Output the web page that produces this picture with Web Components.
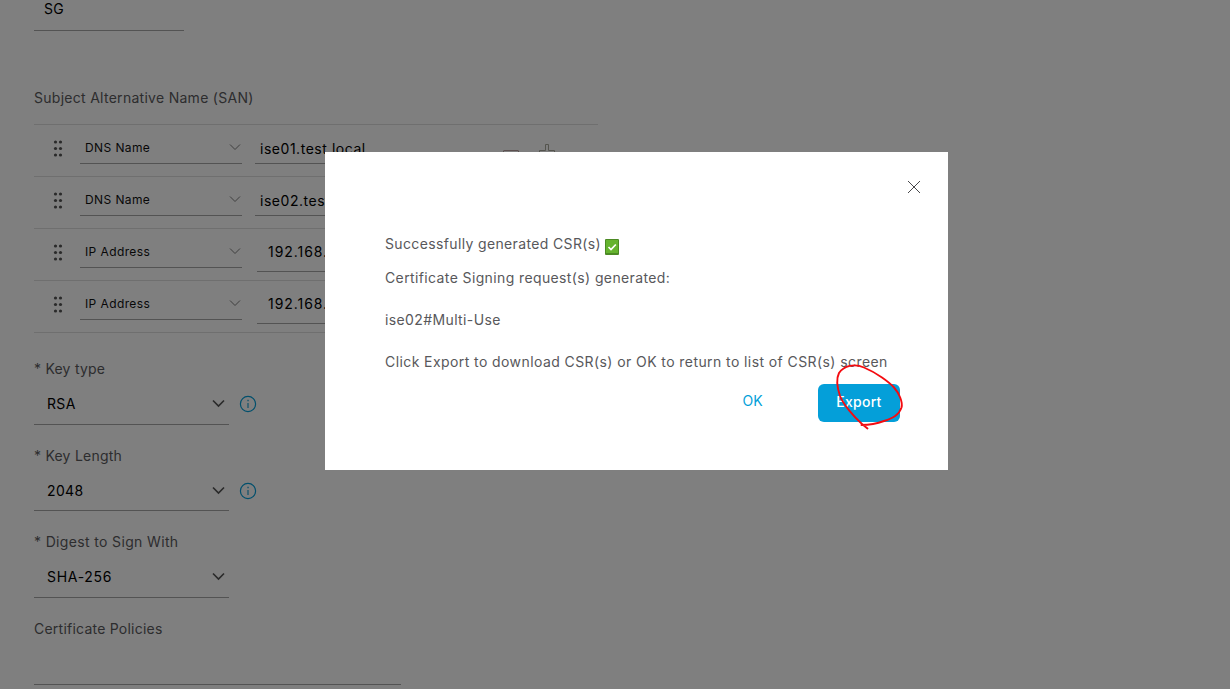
<!DOCTYPE html>
<html lang="en">
<head>
<meta charset="utf-8">
<title>Certificate Signing Request</title>
<style>
  html, body { margin: 0; height: 100%; overflow: hidden; }
  body { background: #fff; font-family: Inter, "Liberation Sans", sans-serif; }
</style>
</head>
<body>
<csr-page>
  <text-field value="SG" style="--w: 150px"></text-field>
  <san-table label="Subject Alternative Name (SAN)">
    <san-row type="DNS Name" value="ise01.test.local"></san-row>
    <san-row type="DNS Name" value="ise02.test.local"></san-row>
    <san-row type="IP Address" value="192.168.1.11" ip></san-row>
    <san-row type="IP Address" value="192.168.1.12" ip></san-row>
  </san-table>
  <select-field label="* Key type" value="RSA" style="--h: 92px" info></select-field>
  <select-field label="* Key Length" value="2048" style="--h: 86px; --box: 45px" info></select-field>
  <select-field label="* Digest to Sign With" value="SHA-256" style="--h: 87px; --label-ls: .35px; --value-ls: .7px"></select-field>
  <select-field label="Certificate Policies" style="--h: 87px; --w: 367px" plain></select-field>
  <csr-dialog slot="overlay">
    <p style="letter-spacing: .36px">Successfully generated CSR(s) <check-mark></check-mark></p>
    <p><span style="letter-spacing: .38px">Certificate Signing request(s) generated:<br><br>ise02#Multi-Use</span><br><br>Click Export to download CSR(s) or OK to return to list of CSR(s) screen</p>
    <dialog-button slot="actions">OK</dialog-button>
    <dialog-button slot="actions" primary>Export</dialog-button>
  </csr-dialog>
</csr-page>

<script>
// ============================================
// Helper
// ============================================

/**
 * Register a custom element
 * @param {string} name - tag name
 * @param {string} styles - scoped CSS
 * @param {(el: HTMLElement) => string} render - template function
 */
function define(name, styles, render) {
  customElements.define(name, class extends HTMLElement {
    connectedCallback() {
      if (this.shadowRoot) return;
      this.attachShadow({ mode: 'open' });
      this.shadowRoot.innerHTML = `<style>${styles}</style>${render(this)}`;
    }
  });
}

// ============================================
// Page and form fields
// ============================================

define('csr-page', `
  :host { display: block; height: 689px; overflow: hidden; }
  main { display: flex; flex-direction: column; align-items: flex-start; padding-left: 34px; }
`, () => `<main><slot></slot></main><slot name="overlay"></slot>`);

define('text-field', `
  :host { display: flex; box-sizing: border-box; width: var(--w); height: 31px;
    padding-left: 10px; border-bottom: 1px solid #a6a6a6; font-size: 14px; line-height: 18px; letter-spacing: .2px; color: #000; }
`, el => `<span>${el.getAttribute('value')}</span>`);

define('san-table', `
  :host { display: block; width: 564px; }
  h3 { margin: 57px 0 16px; font-size: 14px; line-height: 20px; font-weight: 400; letter-spacing: .28px; color: #5a5a5d; }
  .rows { border-bottom: 1px solid #dedede; }
`, el => `<h3>${el.getAttribute('label')}</h3><div class="rows"><slot></slot></div>`);

define('san-row', `
  :host { display: flex; box-sizing: border-box; height: 52px; border-top: 1px solid #dedede; }
  .grip { width: 10px; height: 18px; margin: 14px 17px 0 19px; fill: #555; flex: none; }
  .type { display: flex; justify-content: space-between; box-sizing: border-box; width: 162px; height: 39px;
    padding: 13px 1.5px 0 5px; border-bottom: 1px solid #a6a6a6; font-size: 12px; line-height: 20px;
    letter-spacing: .4px; color: #111; }
  .type svg { width: 12px; height: 8px; margin-top: 5px; }
  .value { box-sizing: border-box; width: 230px; height: 39px; margin-left: 13px; padding: 14px 0 0 5px;
    border-bottom: 1px solid #a6a6a6; font-size: 14px; line-height: 20px; letter-spacing: .53px; color: #000; white-space: nowrap; }
  :host([ip]) .value { height: 43px; width: 228px; margin-left: 15px; padding: 13px 0 0 11px; letter-spacing: .95px; }
  .tools { display: flex; gap: 20px; padding: 19px 0 0 18px; }
  .tools svg { width: 16px; height: 16px; fill: none; }
`, el => `
  <svg class="grip" viewBox="0 0 10 18">
    <circle cx="2.5" cy="3" r="1.6"/><circle cx="7.5" cy="3" r="1.6"/>
    <circle cx="2.5" cy="9.5" r="1.6"/><circle cx="7.5" cy="9.5" r="1.6"/>
    <circle cx="2.5" cy="16" r="1.6"/><circle cx="7.5" cy="16" r="1.6"/>
  </svg>
  <div class="type"><span>${el.getAttribute('type')}</span>
    <svg viewBox="0 0 12 8"><path d="M1 1.5l5 5 5-5" fill="none" stroke="#7d7d7d"/></svg>
  </div>
  <div class="value">${el.getAttribute('value')}</div>
  <div class="tools">
    <svg viewBox="0 0 16 16"><rect x=".5" y="6.5" width="15" height="3" rx=".5" stroke="#b8a0a0"/></svg>
    <svg viewBox="0 0 16 16"><path d="M6.5.5h3v6h6v3h-6v6h-3v-6h-6v-3h6z" stroke="#a8a89c"/></svg>
  </div>`);

define('info-icon', `
  :host { display: block; width: 18px; height: 18px; }
  svg { display: block; }
`, () => `
  <svg width="18" height="18" viewBox="0 0 18 18">
    <circle cx="9" cy="9" r="7.6" fill="none" stroke="#049fd9" stroke-width="1.2"/>
    <path d="M8.2 5.4h1.7M9 8v5" stroke="#4eb4dd" stroke-width="1.5"/>
  </svg>`);

define('select-field', `
  :host { display: flex; flex-direction: column; justify-content: flex-end; height: var(--h); }
  label { font-size: 14px; line-height: 20px; letter-spacing: var(--label-ls, .23px); color: #5a5a5d; }
  .line { display: flex; align-items: flex-start; gap: 10px; }
  .box { display: flex; justify-content: space-between; box-sizing: border-box; width: var(--w, 195px); height: var(--box, 46px);
    padding: 15px 4.5px 0 13px; border-bottom: 1px solid #a6a6a6; font-size: 14px; line-height: 20px;
    letter-spacing: var(--value-ls, .35px); color: #000; }
  .box svg { width: 13px; height: 9px; margin-top: 5px; }
  info-icon { margin-top: 16px; }
`, el => {
  const plain = el.hasAttribute('plain');
  const value = plain ? '' : `<span>${el.getAttribute('value')}</span>
    <svg viewBox="0 0 13 9"><path d="M1 1.5l5.5 5.5 5.5-5.5" fill="none" stroke="#555" stroke-width="1.7"/></svg>`;
  return `<label>${el.getAttribute('label')}</label>
    <div class="line"><div class="box">${value}</div>${el.hasAttribute('info') ? '<info-icon></info-icon>' : ''}</div>`;
});

// ============================================
// Dialog
// ============================================

define('csr-dialog', `
  :host { position: absolute; inset: 0; display: flex; align-items: flex-start; background: rgba(0, 0, 0, .5); }
  section { position: relative; display: flex; flex-direction: column; box-sizing: border-box;
    width: 623px; height: 318px; margin: 152px 0 0 325px; padding: 28px 48px 0 60px; background: #fff; }
  .close { align-self: flex-end; width: 14px; height: 14px; margin-right: -21px; }
  .text { margin-top: 39px; font-size: 14px; line-height: 21px; letter-spacing: .415px; color: #58585b; white-space: nowrap; }
  ::slotted(p) { margin: 0 0 12px; }
  .actions { display: flex; justify-content: flex-end; gap: 36px; margin-top: 0; }
  .mark { position: absolute; left: 505px; top: 208px; width: 80px; height: 76px; }
`, () => `
  <section>
    <svg class="close" viewBox="0 0 14 14"><path d="M1 1l12 12M13 1L1 13" stroke="#48484b" stroke-width="1"/></svg>
    <div class="text"><slot></slot></div>
    <div class="actions"><slot name="actions"></slot></div>
    <!-- hand-drawn ring around the export button -->
    <svg class="mark" viewBox="830 360 80 76">
      <path d="M867.500 428.500L862 424C854 417 843 404 840 396C837 387 836.500 378 839 373C844 366 854 363 864 367.500C877 373 889 382 894 387.500C899 393 903 402 901.500 407.500C899 415 893 418 884 421C876 424 869 425 861.500 425"
        fill="none" stroke="#f40b10" stroke-width="1.900" stroke-linecap="round" stroke-linejoin="round"/>
    </svg>
  </section>`);

define('check-mark', `
  :host { display: inline-block; width: 14px; height: 16px; margin-left: 0; vertical-align: -6px; }
  svg { display: block; }
`, () => `
  <svg width="14" height="16" viewBox="0 0 14 16">
    <rect width="14" height="16" rx="1" fill="#4c8a24"/>
    <rect x="1" y="1" width="12" height="13" fill="#65b32e"/>
    <path d="M3.500 8l2.500 2.500L10.800 5.500" fill="none" stroke="#fff" stroke-width="1.700"/>
  </svg>`);

define('dialog-button', `
  :host { display: block; }
  button { display: block; width: 59px; height: 38px; margin: 0; padding: 0 0 5px; border: 0; background: none;
    font: 400 14px/20px Inter, "Liberation Sans", sans-serif; color: #049fd9; }
  :host([primary]) button { width: 82px; padding-bottom: 3px; border-radius: 6px; background: #049fd9; color: #fff;
    font-weight: 500; letter-spacing: .25px; }
`, () => `<button><slot></slot></button>`);
</script>
</body>
</html>
